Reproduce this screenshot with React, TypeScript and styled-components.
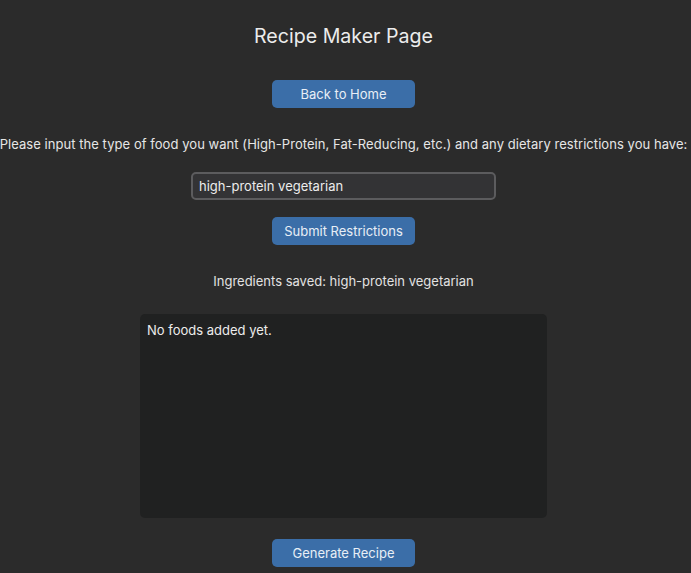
import * as React from 'react'
import styled, { createGlobalStyle } from 'styled-components'

const GlobalStyle = createGlobalStyle`
  html, body {
    margin: 0;
    padding: 0;
    background: #2b2b2b;
  }
  body {
    font-family: Inter, "Noto Sans", "Liberation Sans", sans-serif;
    color: #e6e6e6;
  }
`

const Page = styled.div`
  display: flex;
  flex-direction: column;
  align-items: center;
  width: 687px;
  min-height: 573px;
`

const Title = styled.h1`
  margin: 23px 0 0;
  font-size: 19.6px;
  font-weight: 400;
  line-height: 26px;
  color: #ececec;
`

const Button = styled.button<{ $top: number }>`
  margin-top: ${p => p.$top}px;
  width: 143px;
  height: 28px;
  border: none;
  border-radius: 5px;
  background: #3b6ea8;
  color: #e8eef6;
  font-family: inherit;
  font-size: 13px;
  cursor: pointer;
`

const Prompt = styled.p`
  margin: 28px 0 0;
  font-size: 13px;
  line-height: 16px;
  white-space: nowrap;
  letter-spacing: 0.05px;
  color: #e6e6e6;
`

const Input = styled.input`
  box-sizing: border-box;
  margin-top: 20px;
  width: 305px;
  height: 28px;
  padding: 0 6px;
  border: 2px solid #5c5c5e;
  border-radius: 5px;
  background: #333335;
  color: #ececec;
  font-family: inherit;
  font-size: 13px;
  outline: none;
`

const Saved = styled.p`
  margin: 28px 0 0;
  font-size: 13px;
  line-height: 16px;
  color: #e2e2e2;
`

const FoodBox = styled.div`
  box-sizing: border-box;
  margin-top: 25px;
  width: 407px;
  height: 204px;
  padding: 8px 7px;
  border-radius: 5px;
  background: #202121;
  font-size: 13px;
  line-height: 16px;
  color: #ececec;
`

const App: React.FC = () => {
  const [value, setValue] = React.useState('high-protein vegetarian')
  return (
    <>
      <GlobalStyle />
      <Page>
        <Title>Recipe Maker Page</Title>
        <Button $top={31}>Back to Home</Button>
        <Prompt>
          Please input the type of food you want (High-Protein, Fat-Reducing, etc.) and any dietary restrictions you have:
        </Prompt>
        <Input value={value} onChange={e => setValue(e.target.value)} />
        <Button $top={17}>Submit Restrictions</Button>
        <Saved>Ingredients saved: high-protein vegetarian</Saved>
        <FoodBox>No foods added yet.</FoodBox>
        <Button $top={21}>Generate Recipe</Button>
      </Page>
    </>
  )
}

export default App
